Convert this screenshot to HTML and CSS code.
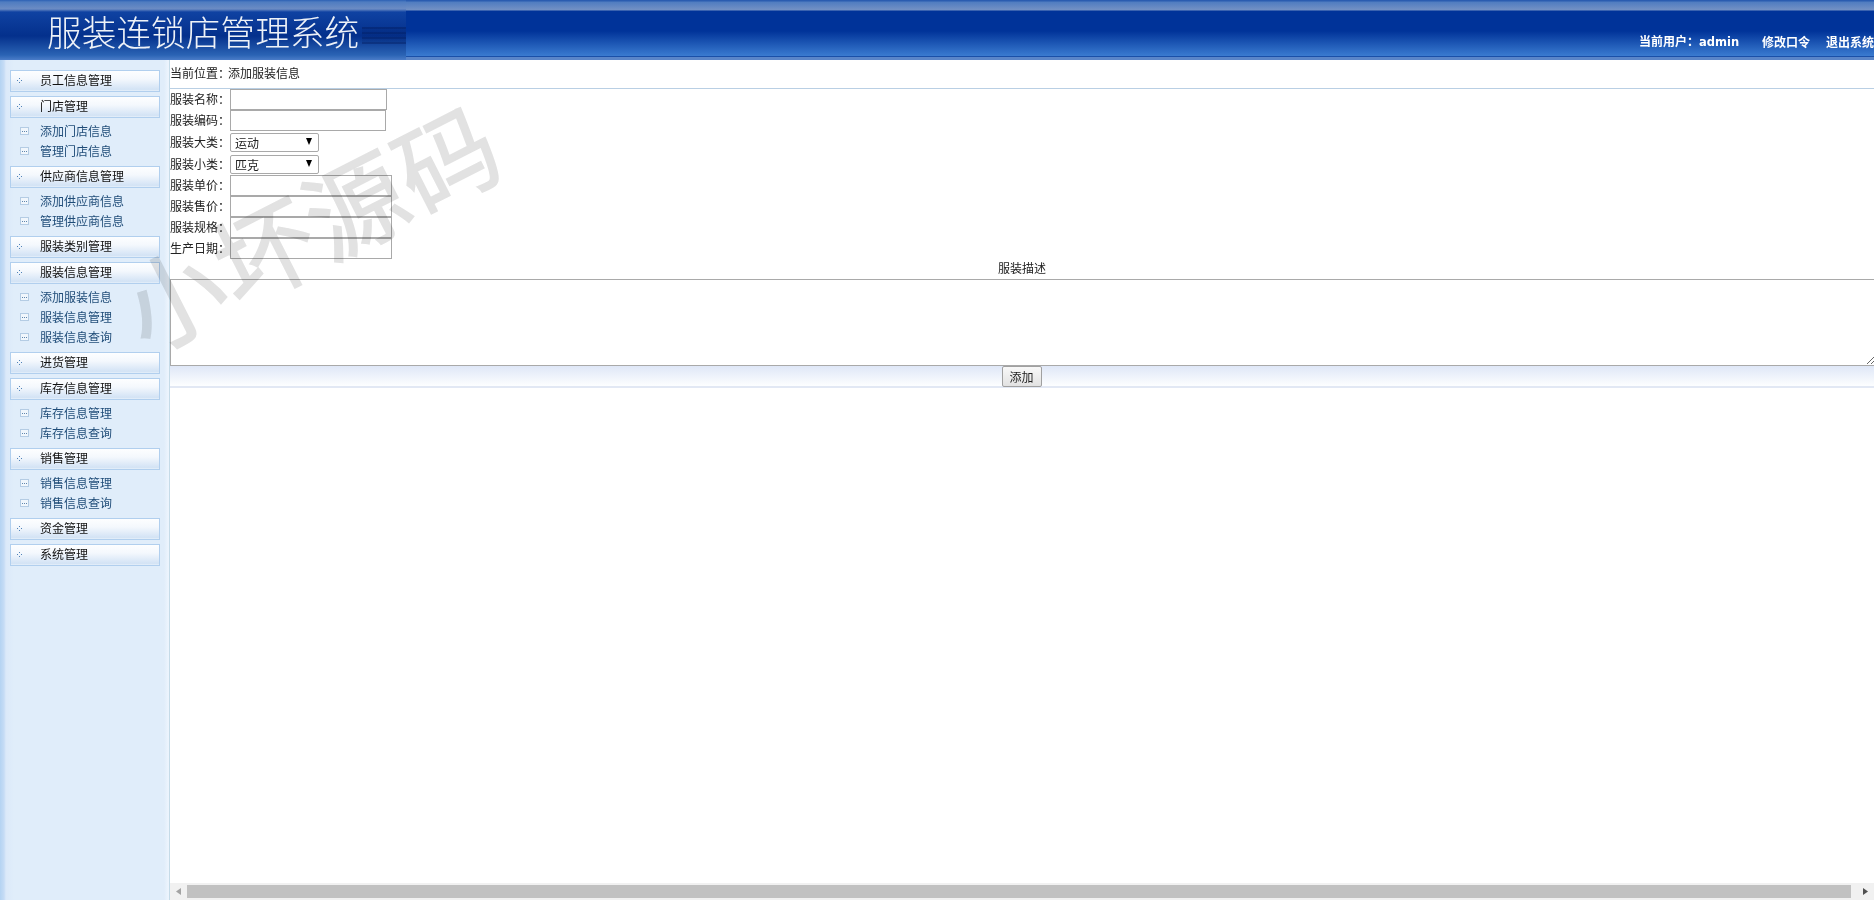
FILE: index.html
```html
<!DOCTYPE html>
<html lang="zh-CN">
<head>
<meta charset="utf-8">
<title>服装连锁店管理系统</title>
<link rel="stylesheet" href="styles.css">
</head>
<body>
<header class="top">
  <div class="logo"><span class="logo-text">服装连锁店管理系统</span></div>
  <nav class="userbar">
    <span class="who">当前用户：<b class="name">admin</b></span>
    <a class="tlink">修改口令</a>
    <a class="tlink last">退出系统</a>
  </nav>
</header>
<div class="body">
  <aside class="side">
    <div class="menu"><svg class="dots" width="5" height="5" viewBox="0 0 5 5"><path d="M2 0h1v1H2zM0 2h1v1H0zM4 2h1v1H4zM2 4h1v1H2z"/></svg><span>员工信息管理</span></div>
    <div class="menu"><svg class="dots" width="5" height="5" viewBox="0 0 5 5"><path d="M2 0h1v1H2zM0 2h1v1H0zM4 2h1v1H4zM2 4h1v1H2z"/></svg><span>门店管理</span></div>
    <ul class="subs">
      <li><i class="box"></i>添加门店信息</li>
      <li><i class="box"></i>管理门店信息</li>
    </ul>
    <div class="menu"><svg class="dots" width="5" height="5" viewBox="0 0 5 5"><path d="M2 0h1v1H2zM0 2h1v1H0zM4 2h1v1H4zM2 4h1v1H2z"/></svg><span>供应商信息管理</span></div>
    <ul class="subs">
      <li><i class="box"></i>添加供应商信息</li>
      <li><i class="box"></i>管理供应商信息</li>
    </ul>
    <div class="menu"><svg class="dots" width="5" height="5" viewBox="0 0 5 5"><path d="M2 0h1v1H2zM0 2h1v1H0zM4 2h1v1H4zM2 4h1v1H2z"/></svg><span>服装类别管理</span></div>
    <div class="menu"><svg class="dots" width="5" height="5" viewBox="0 0 5 5"><path d="M2 0h1v1H2zM0 2h1v1H0zM4 2h1v1H4zM2 4h1v1H2z"/></svg><span>服装信息管理</span></div>
    <ul class="subs">
      <li><i class="box"></i>添加服装信息</li>
      <li><i class="box"></i>服装信息管理</li>
      <li><i class="box"></i>服装信息查询</li>
    </ul>
    <div class="menu"><svg class="dots" width="5" height="5" viewBox="0 0 5 5"><path d="M2 0h1v1H2zM0 2h1v1H0zM4 2h1v1H4zM2 4h1v1H2z"/></svg><span>进货管理</span></div>
    <div class="menu"><svg class="dots" width="5" height="5" viewBox="0 0 5 5"><path d="M2 0h1v1H2zM0 2h1v1H0zM4 2h1v1H4zM2 4h1v1H2z"/></svg><span>库存信息管理</span></div>
    <ul class="subs">
      <li><i class="box"></i>库存信息管理</li>
      <li><i class="box"></i>库存信息查询</li>
    </ul>
    <div class="menu"><svg class="dots" width="5" height="5" viewBox="0 0 5 5"><path d="M2 0h1v1H2zM0 2h1v1H0zM4 2h1v1H4zM2 4h1v1H2z"/></svg><span>销售管理</span></div>
    <ul class="subs">
      <li><i class="box"></i>销售信息管理</li>
      <li><i class="box"></i>销售信息查询</li>
    </ul>
    <div class="menu"><svg class="dots" width="5" height="5" viewBox="0 0 5 5"><path d="M2 0h1v1H2zM0 2h1v1H0zM4 2h1v1H4zM2 4h1v1H2z"/></svg><span>资金管理</span></div>
    <div class="menu"><svg class="dots" width="5" height="5" viewBox="0 0 5 5"><path d="M2 0h1v1H2zM0 2h1v1H0zM4 2h1v1H4zM2 4h1v1H2z"/></svg><span>系统管理</span></div>
  </aside>
  <main class="main">
    <div class="pane">
      <div class="crumb"><span class="crumb-key">当前位置：</span>添加服装信息</div>
      <form class="form">
        <div class="row"><label class="lbl">服装名称：</label><input class="ipt w157" type="text"></div>
        <div class="row"><label class="lbl">服装编码：</label><input class="ipt w156" type="text"></div>
        <div class="row tall"><label class="lbl">服装大类：</label><span class="sel"><select class="dd"><option>运动</option></select></span></div>
        <div class="row tall"><label class="lbl">服装小类：</label><span class="sel"><select class="dd"><option>匹克</option></select></span></div>
        <div class="row"><label class="lbl">服装单价：</label><input class="ipt w162" type="text"></div>
        <div class="row"><label class="lbl">服装售价：</label><input class="ipt w162" type="text"></div>
        <div class="row"><label class="lbl">服装规格：</label><input class="ipt w162" type="text"></div>
        <div class="row"><label class="lbl">生产日期：</label><input class="ipt w162" type="text"></div>
        <div class="desc">服装描述</div>
        <textarea class="area"></textarea>
        <div class="actions"><button class="btn" type="button">添加</button></div>
      </form>
    </div>
    <div class="hbar">
      <svg class="harrow" width="5" height="7" viewBox="0 0 5 7"><path d="M5 0v7L0 3.5z"/></svg>
      <div class="thumb"></div>
      <svg class="harrow end" width="5" height="7" viewBox="0 0 5 7"><path d="M0 0v7l5-3.500z"/></svg>
    </div>
  </main>
</div>
<div class="mark">小坏源码</div>
</body>
</html>
```
FILE: styles.css
```css
* { box-sizing: border-box; }
html, body { margin: 0; height: 100%; }
body {
  display: flex;
  flex-direction: column;
  height: 100vh;
  overflow: hidden;
  font: 12px/1 "Noto Sans CJK SC", "Liberation Sans", sans-serif;
  color: #222;
  background: #fff;
}
.top {
  height: 60px;
  flex: none;
  display: flex;
  justify-content: space-between;
  background: linear-gradient(to bottom,
    #2a5cb0 0, #2a5cb0 1px, #4f7cc0 2px, #7391c4 10px, #003399 11px, #003399 31px,
    #3a7bd0 56px, #1a50a8 56px, #1a50a8 57px, #5a85c8 57px, #5a85c8 60px);
  overflow: hidden;
}
.logo {
  width: 406px;
  flex: none;
  padding: 14px 0 0 47px;
  background:
    repeating-linear-gradient(to bottom, rgba(0, 20, 80, .35) 0 2px, rgba(0, 20, 80, .12) 2px 5px) 362px 27px / 44px 17px no-repeat,
    linear-gradient(to bottom,
    #2c60b4 0, #4f7cc0 2px, #6c8cc4 9px, #0f42a2 12px, #04308c 36px, #2a63b4 55px, #4a7cc8 60px);
}
.logo-text {
  display: block;
  font-size: 34.7px;
  line-height: 35px;
  font-weight: 300;
  white-space: nowrap;
  color: #eef2f8;
}
.userbar {
  display: flex;
  flex: none;
  align-items: center;
  width: 235px;
  padding-top: 24px;
  color: #fff;
  font-weight: 700;
  white-space: nowrap;
}
.who { width: 123px; flex: none; }
.name { font-family: "DejaVu Sans", sans-serif; font-size: 11.5px; }
.tlink { width: 64px; flex: none; }
.tlink.last { width: 48px; }
.body {
  flex: 1;
  min-height: 0;
  display: flex;
}
.side {
  width: 170px;
  flex: none;
  padding: 10px 0 0 10px;
  background: linear-gradient(to right, #b4d3f2 0, #c6dcf5 4px, #dbe9f9 6px, #e0edfa 14px, #e0edfa 164px, #ecf4fd 168px);
  border-right: 1px solid #c5dbe8;
}
.menu {
  width: 150px;
  height: 22px;
  margin-bottom: 4px;
  padding-bottom: 2px;
  display: flex;
  align-items: center;
  border: 1px solid #b1cfee;
  background: linear-gradient(to bottom, #fdfeff 0, #f4f8fd 40%, #d3e3f5 92%, #e6f0fa 100%);
  color: #111;
}
.dots { margin: 0 18px 0 6px; fill: #4f82b8; flex: none; }
.subs { list-style: none; margin: 0 0 4px; padding: 0; }
.subs li {
  height: 20px;
  display: flex;
  align-items: center;
  padding: 0 0 2px 10px;
  color: #1f4c78;
}
.box {
  width: 9px;
  height: 8px;
  margin-right: 11px;
  flex: none;
  border: 1px solid #b4cce4;
  background: repeating-linear-gradient(to right, #5f86ad 0 1px, transparent 1px 2px) center / 5px 1px no-repeat #f0f6fc;
}
.main {
  flex: 1;
  min-width: 0;
  display: flex;
  flex-direction: column;
}
.pane { flex: 1; min-height: 0; overflow: hidden; }
.crumb {
  height: 29px;
  display: flex;
  align-items: center;
  border-bottom: 1px solid #b9cfe4;
  padding-bottom: 3px;
}
.crumb-key { margin-right: -2px; }
.form { display: flex; flex-direction: column; }
.row { height: 21px; display: flex; align-items: center; }
.row.tall { height: 22px; }
.lbl { width: 60px; flex: none; padding-bottom: 1px; }
.ipt {
  height: 21px;
  padding: 0 2px;
  border: 1px solid #a9a9a9;
  background: transparent;
  outline: none;
}
.w157 { width: 157px; }
.w156 { width: 156px; }
.w162 { width: 162px; }
.sel { position: relative; display: block; width: 89px; height: 19px; }
.sel::after {
  content: "";
  position: absolute;
  right: 7px;
  top: 5px;
  border-style: solid;
  border-width: 7px 3.5px 0;
  border-color: #000 transparent transparent;
}
.dd {
  appearance: none;
  width: 100%;
  height: 100%;
  padding: 2px 4px 0;
  border: 1px solid #a9a9a9;
  border-radius: 2px;
  background: #fff;
  font: inherit;
  color: #222;
  outline: none;
}
.desc { height: 20px; line-height: 18px; text-align: center; }
.area {
  display: block;
  width: calc(100% + 2px);
  height: 87px;
  border: 1px solid #a9a9a9;
  background: transparent;
  outline: none;
  margin: 0;
}
.actions {
  height: 22px;
  display: flex;
  justify-content: center;
  padding-right: 1px;
  background: linear-gradient(to bottom, #dfe7f7, #fdfeff);
  border-bottom: 2px solid #e2e8f4;
}
.btn {
  width: 40px;
  height: 21px;
  padding: 0;
  border: 1px solid #a0a0a0;
  border-radius: 2px;
  background: linear-gradient(to bottom, #f8f8f8, #e2e2e2);
  font: inherit;
  color: #222;
}
.hbar {
  height: 17px;
  flex: none;
  display: flex;
  align-items: center;
  padding: 0 6px;
  background: #f1f1f1;
}
.harrow { flex: none; fill: #a3a3a3; }
.harrow.end { fill: #505050; }
.thumb { flex: 1; height: 13px; margin: 0 12px 0 6px; background: #c1c1c1; }
.mark {
  position: absolute;
  left: 105px;
  top: 174px;
  font-size: 100px;
  line-height: 1;
  letter-spacing: 2px;
  white-space: nowrap;
  color: #e2e2e2;
  -webkit-text-stroke: 1.5px #e2e2e2;
  mix-blend-mode: multiply;
  transform: rotate(-27deg);
  pointer-events: none;
}
```
